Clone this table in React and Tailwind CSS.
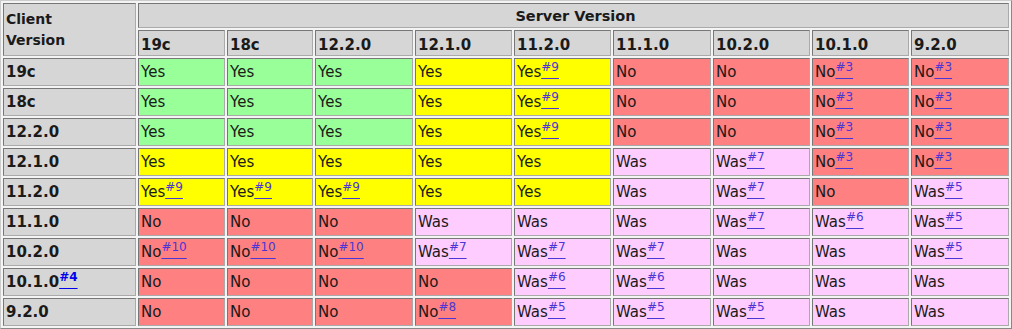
const COLS = ["19c", "18c", "12.2.0", "12.1.0", "11.2.0", "11.1.0", "10.2.0", "10.1.0", "9.2.0"];
const WIDTHS = ["w-[87px]", "w-[86px]", "w-[98px]", "w-[97px]", "w-[97px]", "w-[98px]", "w-[97px]", "w-[97px]", "w-[98px]"];

const BG = {
  G: "bg-[#99ff99]",
  Y: "bg-[#ffff00]",
  R: "bg-[#ff8080]",
  P: "bg-[#ffccff]",
};

// each cell: [text, colour, note]
const ROWS = [
  { v: "19c", cells: [["Yes", "G"], ["Yes", "G"], ["Yes", "G"], ["Yes", "Y"], ["Yes", "Y", "#9"], ["No", "R"], ["No", "R"], ["No", "R", "#3"], ["No", "R", "#3"]] },
  { v: "18c", cells: [["Yes", "G"], ["Yes", "G"], ["Yes", "G"], ["Yes", "Y"], ["Yes", "Y", "#9"], ["No", "R"], ["No", "R"], ["No", "R", "#3"], ["No", "R", "#3"]] },
  { v: "12.2.0", cells: [["Yes", "G"], ["Yes", "G"], ["Yes", "G"], ["Yes", "Y"], ["Yes", "Y", "#9"], ["No", "R"], ["No", "R"], ["No", "R", "#3"], ["No", "R", "#3"]] },
  { v: "12.1.0", cells: [["Yes", "Y"], ["Yes", "Y"], ["Yes", "Y"], ["Yes", "Y"], ["Yes", "Y"], ["Was", "P"], ["Was", "P", "#7"], ["No", "R", "#3"], ["No", "R", "#3"]] },
  { v: "11.2.0", cells: [["Yes", "Y", "#9"], ["Yes", "Y", "#9"], ["Yes", "Y", "#9"], ["Yes", "Y"], ["Yes", "Y"], ["Was", "P"], ["Was", "P", "#7"], ["No", "R"], ["Was", "P", "#5"]] },
  { v: "11.1.0", cells: [["No", "R"], ["No", "R"], ["No", "R"], ["Was", "P"], ["Was", "P"], ["Was", "P"], ["Was", "P", "#7"], ["Was", "P", "#6"], ["Was", "P", "#5"]] },
  { v: "10.2.0", cells: [["No", "R", "#10"], ["No", "R", "#10"], ["No", "R", "#10"], ["Was", "P", "#7"], ["Was", "P", "#7"], ["Was", "P", "#7"], ["Was", "P"], ["Was", "P"], ["Was", "P", "#5"]] },
  { v: "10.1.0", note: "#4", cells: [["No", "R"], ["No", "R"], ["No", "R"], ["No", "R"], ["Was", "P", "#6"], ["Was", "P", "#6"], ["Was", "P"], ["Was", "P"], ["Was", "P"]] },
  { v: "9.2.0", cells: [["No", "R"], ["No", "R"], ["No", "R"], ["No", "R", "#8"], ["Was", "P", "#5"], ["Was", "P", "#5"], ["Was", "P", "#5"], ["Was", "P"], ["Was", "P"]] },
];

const cellBorder = "border border-t-[#777] border-l-[#777] border-b-[#aaa] border-r-[#aaa]";

function Note({ children, bright }) {
  return (
    <a className={`underline ${bright ? "text-[#0000ee]" : "text-[#4a36d4]"}`}>
      <sup className="text-[12px]">{children}</sup>
    </a>
  );
}

export default function App() {
  return (
    <div className="w-[1012px] h-[329px] bg-white font-['DejaVu_Sans',Verdana,sans-serif] text-[15px] leading-[18px] text-[#1a1a1a]">
      <table className="table-fixed border-separate border-spacing-[2px] border border-t-[#ccc] border-l-[#ccc] border-b-[#888] border-r-[#888] bg-[#f4f4f4]">
        <thead>
          <tr className="h-[25px]">
            <th rowSpan={2} className={`w-[133px] ${cellBorder} bg-[#d6d6d6] text-left align-middle px-[2px] font-bold text-[14px] leading-[21px]`}>
              Client
              <br />
              Version
            </th>
            <th colSpan={9} className={`${cellBorder} bg-[#d6d6d6] text-center font-bold text-[14.5px] p-0 pl-[4px]`}>
              Server Version
            </th>
          </tr>
          <tr className="h-[26px]">
            {COLS.map((c, i) => (
              <th key={c} className={`${WIDTHS[i]} ${cellBorder} bg-[#d6d6d6] text-left px-[2px] font-bold pt-[3px]`}>
                {c}
              </th>
            ))}
          </tr>
        </thead>
        <tbody>
          {ROWS.map((r) => (
            <tr key={r.v} className="h-[28px]">
              <th className={`${cellBorder} bg-[#d6d6d6] text-left px-[2px] font-bold`}>
                {r.v}
                {r.note && <Note bright>{r.note}</Note>}
              </th>
              {r.cells.map(([t, c, n], i) => (
                <td key={i} className={`${cellBorder} ${BG[c]} px-[2px] p-0`}>
                  {t}
                  {n && <Note>{n}</Note>}
                </td>
              ))}
            </tr>
          ))}
        </tbody>
      </table>
    </div>
  );
}
